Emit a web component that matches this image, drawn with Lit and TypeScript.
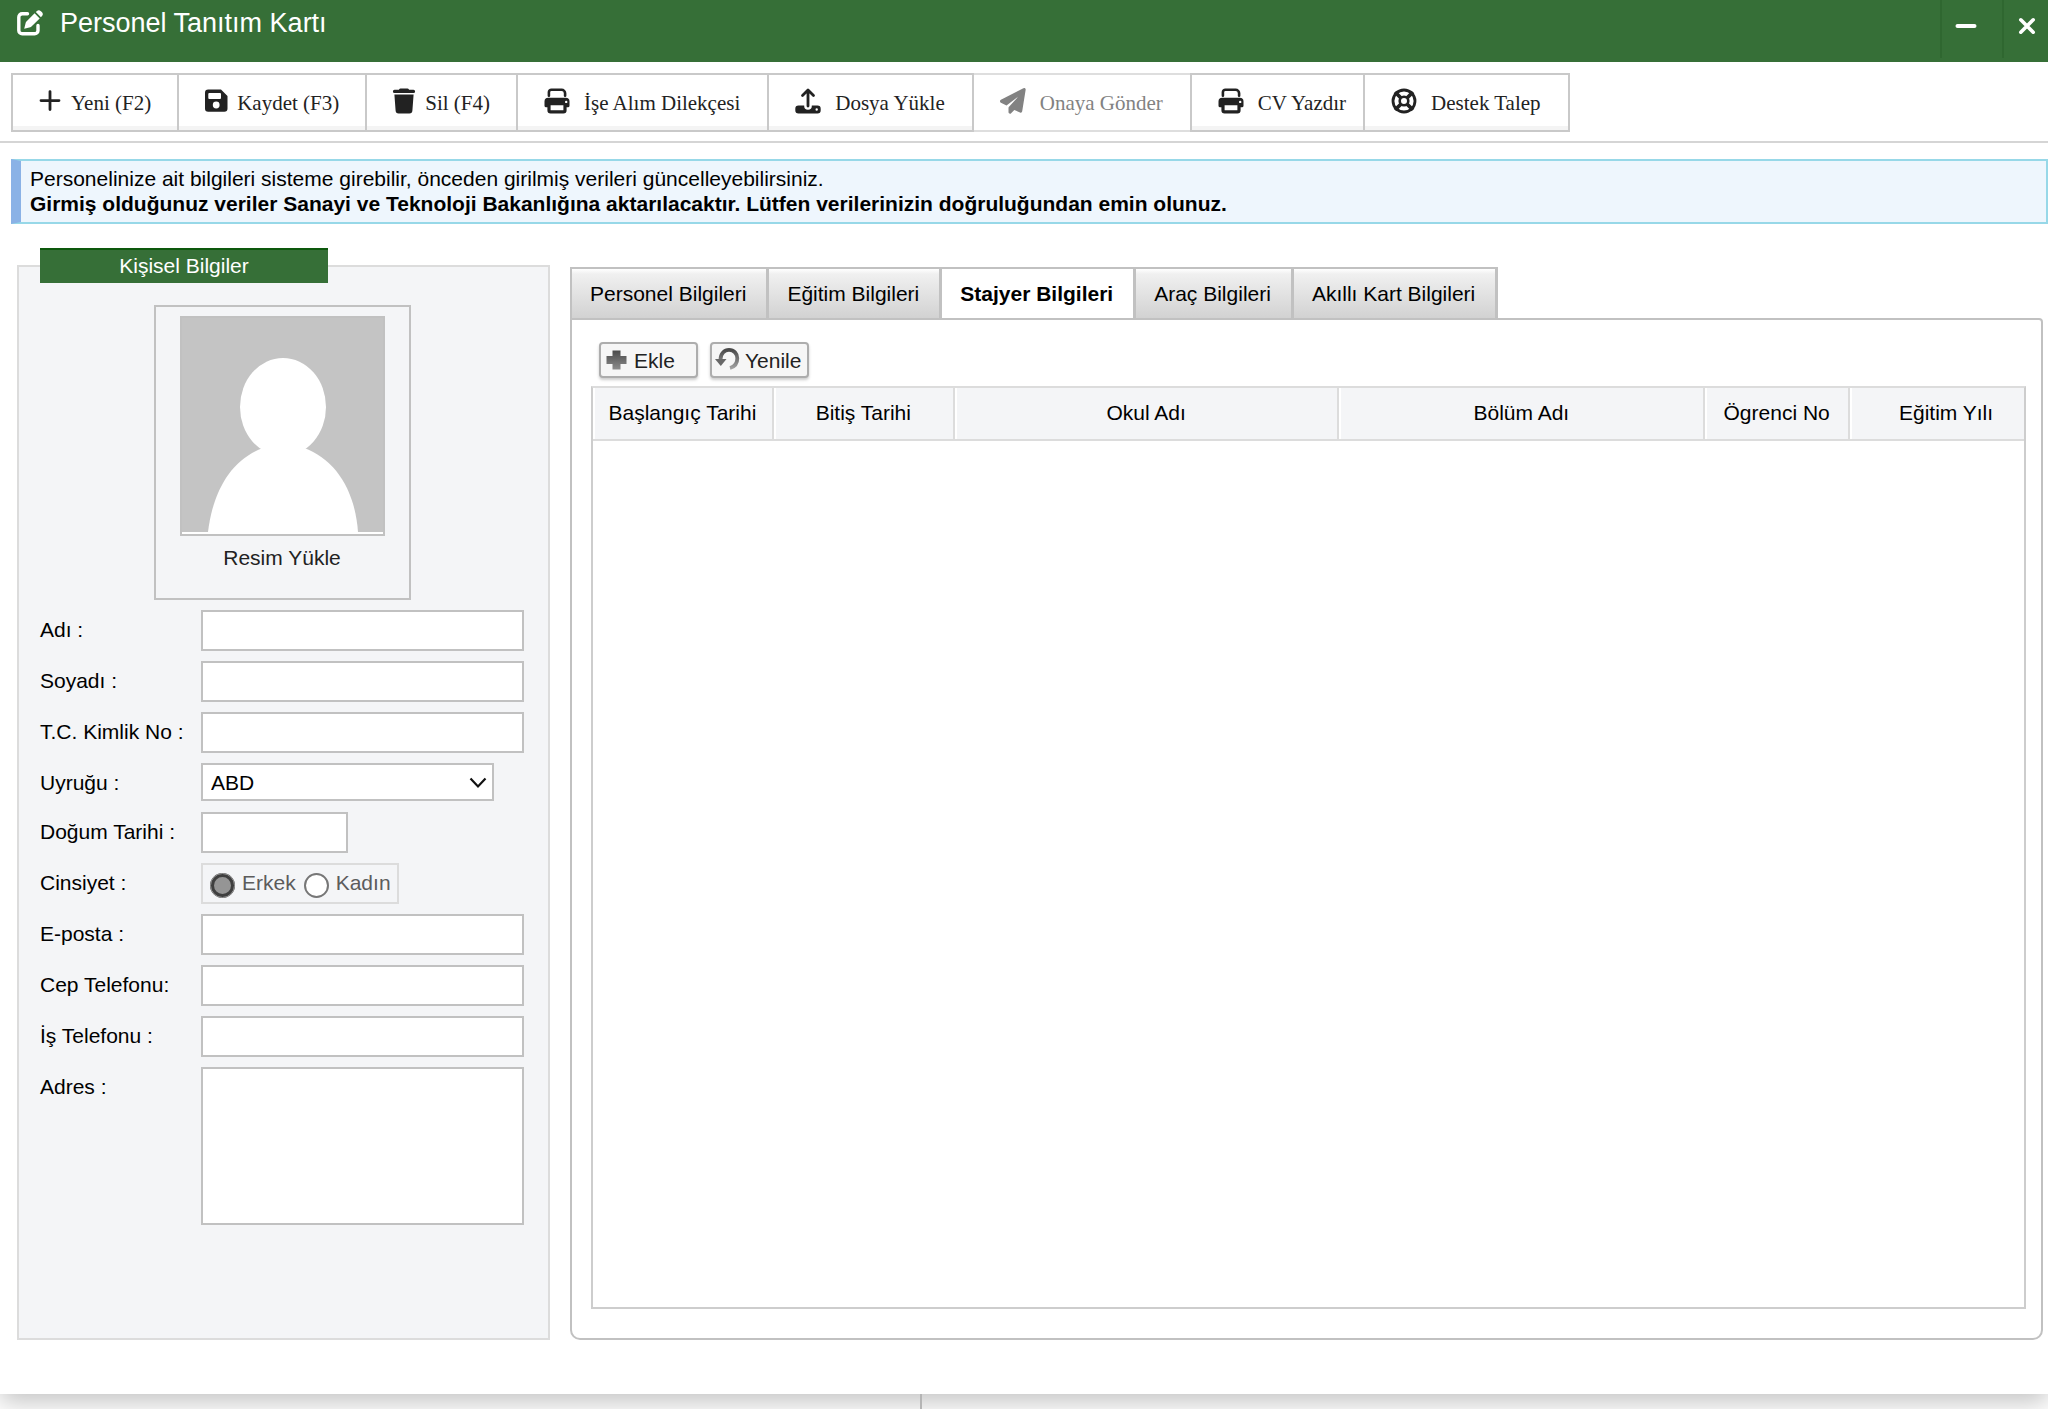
import { LitElement, html, css, svg } from "lit";
import { customElement, property, state } from "lit/decorators.js";
import { classMap } from "lit/directives/class-map.js";

const icons: Record<string, unknown> = {
  edit: svg`<path fill="none" stroke="currentColor" stroke-width="3.400" stroke-linecap="round" stroke-linejoin="round" d="M10.500 3.800H5.200A3.400 3.400 0 0 0 1.800 7.200v13.200a3.400 3.400 0 0 0 3.400 3.400h12.400a3.400 3.400 0 0 0 3.400-3.400v-5"/><path fill="currentColor" d="M7.200 18.800l1.500-6.100a2 2 0 0 1 .5-.9l8.400-8.500 5.100 5.100-8.500 8.400a2 2 0 0 1-.9.5zM18.800 2.100l.9-.9a3 3 0 0 1 4.200 0l.9.9a3 3 0 0 1 0 4.200l-.9.9z"/>`,
  plus: svg`<path fill="none" stroke="currentColor" stroke-width="2.800" stroke-linecap="round" d="M13 3.600v18M4 12.600h18"/>`,
  save: svg`<path fill="currentColor" fill-rule="evenodd" d="M5.500 1.500H18L24.500 8v12.500a3.200 3.200 0 0 1-3.200 3.200H5.200A3.200 3.200 0 0 1 2 20.500V4.700a3.200 3.200 0 0 1 3.200-3.200zM6.300 5a1 1 0 0 0-1 1v4a1 1 0 0 0 1 1H17a1 1 0 0 0 1-1V6a1 1 0 0 0-1-1zM13.200 13.600a3.400 3.400 0 1 0 0 6.800 3.400 3.400 0 0 0 0-6.800z"/>`,
  trash: svg`<path fill="currentColor" d="M9.500.4h7a1.400 1.400 0 0 1 1.300.9l.2.500h4.500a1.500 1.500 0 0 1 0 3.200h-19a1.500 1.500 0 0 1 0-3.200H8l.2-.5a1.400 1.400 0 0 1 1.300-.9zM3.400 6.400h19.200l-1.200 16.200a3 3 0 0 1-3 2.900H7.600a3 3 0 0 1-3-2.900z"/>`,
  print: svg`<path fill="none" stroke="currentColor" stroke-width="2.600" stroke-linecap="round" d="M4.900 7.700V4.300A2.500 2.500 0 0 1 7.400 1.800h10.200a3.500 3.500 0 0 1 3.500 3.500v2.400"/><path fill="currentColor" fill-rule="evenodd" d="M4.200 9.800h17.600a3.700 3.700 0 0 1 3.700 3.700v4.200a1.600 1.600 0 0 1-1.600 1.600h-1.300v3a3.200 3.200 0 0 1-3.200 3.200H6.600a3.200 3.200 0 0 1-3.200-3.200v-3H2.100a1.600 1.600 0 0 1-1.600-1.600v-4.200a3.700 3.700 0 0 1 3.700-3.700zM6.600 17.300v5h12.800v-5zM22.200 12.700a1.200 1.200 0 1 0 0 2.400 1.200 1.200 0 0 0 0-2.400z"/>`,
  upload: svg`<path fill="none" stroke="currentColor" stroke-width="2.800" stroke-linecap="round" stroke-linejoin="round" d="M13 18V2.200M7.500 7.500L13 2l5.500 5.500"/><path fill="currentColor" fill-rule="evenodd" d="M3.500 17.600h5.700v.4a3.800 3.800 0 0 0 7.600 0v-.4h5.700a3.200 3.200 0 0 1 3.200 3.200v1.500a3.200 3.200 0 0 1-3.200 3.200h-19A3.200 3.200 0 0 1 .3 22.300v-1.500a3.200 3.200 0 0 1 3.200-3.200zM21.700 20.300a1.200 1.200 0 1 0 0 2.400 1.200 1.200 0 0 0 0-2.400z"/>`,
  plane: svg`<path fill="currentColor" d="M25.700 1.500l-3.500 21.800a1.600 1.600 0 0 1-2.200 1.200l-5.700-2.500-3.200 3.200a1.500 1.500 0 0 1-2.600-1.100v-4.200c0-.4.200-.8.500-1.100L18.300 8.600 6.500 17.400.9 14.700a1.600 1.600 0 0 1 0-2.900L23.400.3a1.600 1.600 0 0 1 2.300 1.200z"/>`,
  life: svg`<g fill="none" stroke="currentColor"><circle stroke-width="2.800" cx="13" cy="13" r="11"/><circle stroke-width="2.600" cx="13" cy="13" r="4.300"/><path stroke-width="3.800" d="M4 4l6 6M16 16l6 6M22 4l-6 6M10 16l-6 6"/></g>`,
  minus: svg`<path stroke="currentColor" stroke-width="4" stroke-linecap="round" d="M4.500 13h17"/>`,
  close: svg`<path stroke="currentColor" stroke-width="3.600" stroke-linecap="round" d="M6.800 6.800l12.400 12.400M19.200 6.800L6.800 19.200"/>`,
  add: svg`<defs><linearGradient id="a" x2="0" y2="1"><stop stop-color="#4a4a4a"/><stop offset="1" stop-color="#8c8c8c"/></linearGradient></defs><path fill="url(#a)" d="M8.500 3.500h8V9h6v8h-6v5.500h-8V17h-6V9h6z"/>`,
  undo: svg`<defs><linearGradient id="u" x2="0" y2="1"><stop stop-color="#4a4a4a"/><stop offset="1" stop-color="#a0a0a0"/></linearGradient></defs><path fill="none" stroke="url(#u)" stroke-width="3.800" d="M5.500 12.500C5.500 6.500 9.500 2.900 14 2.900c5 0 8.300 3.700 8.300 8.400 0 5-3 8.600-7.300 9.700"/><path fill="#686868" d="M0 12h11.500l-5.700 7z"/>`,
};

@customElement("ui-icon")
class UiIcon extends LitElement {
  @property() name = "";
  static styles = css`
    :host { display: inline-flex; flex: none; }
    svg { width: 26px; height: 26px; display: block; }
  `;
  render() {
    return html`<svg viewBox="0 0 26 26" aria-hidden="true">${icons[this.name]}</svg>`;
  }
}

interface Tool { icon: string; label: string; tight?: boolean; snug?: boolean; disabled?: boolean }

const tools: Tool[] = [
  { icon: "plus", label: "Yeni (F2)", tight: true },
  { icon: "save", label: "Kaydet (F3)", tight: true },
  { icon: "trash", label: "Sil (F4)", tight: true },
  { icon: "print", label: "İşe Alım Dilekçesi" },
  { icon: "upload", label: "Dosya Yükle" },
  { icon: "plane", label: "Onaya Gönder", disabled: true },
  { icon: "print", label: "CV Yazdır", snug: true },
  { icon: "life", label: "Destek Talep" },
];

const tabs = ["Personel Bilgileri", "Eğitim Bilgileri", "Stajyer Bilgileri", "Araç Bilgileri", "Akıllı Kart Bilgileri"];

const columns = [
  { label: "Başlangıç Tarihi", width: 181 },
  { label: "Bitiş Tarihi", width: 181 },
  { label: "Okul Adı", width: 385 },
  { label: "Bölüm Adı", width: 366 },
  { label: "Ögrenci No", width: 145 },
  { label: "Eğitim Yılı", width: 174 },
];
const totalWidth = columns.reduce((sum, c) => sum + c.width, 0);

@customElement("personal-info")
class PersonalInfo extends LitElement {
  static styles = css`
    :host { display: grid; }
    * { box-sizing: border-box; }
    .panel { min-width: 0; margin: 0; padding: 0 24px 0 21px; border: 2px solid #dcdcdc; background: #f4f5f7; }
    .legend { width: 288px; height: 35px; margin: 0 auto 0 0; padding: 0; border-top: 2px solid #0d580d; background: #366f37; color: #fff; text-align: center; line-height: 32px; }
    .photo { display: flex; flex-direction: column; align-items: center; width: 257px; height: 295px; margin: 22px auto 10px; padding: 9px 0 0; border: 2px solid #c1c1c1; background: none; font: inherit; color: #222; }
    .avatar { display: block; width: 205px; height: 220px; border: 2px solid #c1c1c1; background: #fff; }
    .caption { line-height: 44px; }
    .form { display: grid; grid-template-columns: 161px 1fr; row-gap: 10px; }
    .label { line-height: 39px; white-space: nowrap; }
    .box { width: 100%; height: 41px; margin: 0; padding: 0 8px; border: 2px solid #c1c1c1; border-radius: 0; background: #fff; font: inherit; color: #000; }
    .short { width: 147px; }
    .area { display: block; height: 158px; resize: none; }
    .pick { display: grid; width: 293px; }
    .pick > * { grid-area: 1 / 1; }
    .select { height: 38px; appearance: none; }
    .arrow { place-self: center end; width: 18px; height: 12px; margin-right: 7px; pointer-events: none; }
    .gender { display: flex; align-items: center; justify-self: start; gap: 8px; width: 198px; height: 41px; padding: 0 7px 3px; border: 2px solid #dcdcdc; color: #5c5c5c; }
    .choice { display: flex; align-items: center; gap: 7px; }
    .radio { appearance: none; flex: none; width: 25px; height: 25px; margin: 6px 0 0; border: 2px solid #777; border-radius: 50%; background: #fff; }
    .radio:checked { border: 4px solid #3f3f3f; background: #959595; outline: 1px solid #999; outline-offset: -1px; }
  `;

  private text(id: string, label: string, extra = "") {
    return html`<label class="label" for=${id}>${label}</label><input class="box ${extra}" id=${id} type="text" />`;
  }

  render() {
    return html`
      <fieldset class="panel">
        <legend class="legend">Kişisel Bilgiler</legend>
        <button class="photo" type="button">
          <svg class="avatar" viewBox="0 0 201 216" aria-hidden="true">
            <path fill="#c4c4c4" d="M0 0h201v214H0z" />
            <ellipse fill="#fff" cx="101" cy="89" rx="43" ry="49" />
            <path fill="#fff" d="M26 214C31 172 50 141 81 130h41c31 11 51 42 54 84z" />
          </svg>
          <span class="caption">Resim Yükle</span>
        </button>
        <div class="form">
          ${this.text("ad", "Adı :")} ${this.text("soyad", "Soyadı :")} ${this.text("tc", "T.C. Kimlik No :")}
          <label class="label" for="uyruk">Uyruğu :</label>
          <div class="pick">
            <select class="box select" id="uyruk"><option>ABD</option></select>
            <svg class="arrow" viewBox="0 0 18 12" aria-hidden="true"><path d="M1.500 1.500L9 9.500l7.500-8" fill="none" stroke="#111" stroke-width="2.200" /></svg>
          </div>
          ${this.text("dogum", "Doğum Tarihi :", "short")}
          <span class="label" id="cinsiyet">Cinsiyet :</span>
          <div class="gender" role="radiogroup" aria-labelledby="cinsiyet">
            <label class="choice"><input class="radio" type="radio" name="cinsiyet" checked />Erkek</label>
            <label class="choice"><input class="radio" type="radio" name="cinsiyet" />Kadın</label>
          </div>
          ${this.text("eposta", "E-posta :")} ${this.text("cep", "Cep Telefonu:")} ${this.text("is", "İş Telefonu :")}
          <label class="label" for="adres">Adres :</label>
          <textarea class="box area" id="adres"></textarea>
        </div>
      </fieldset>
    `;
  }
}

@customElement("detail-tabs")
class DetailTabs extends LitElement {
  @state() private active = 2;

  static styles = css`
    :host { display: flex; flex-direction: column; min-width: 0; }
    * { box-sizing: border-box; }
    .tabs { display: flex; border-left: 2px solid #c1c1c1; }
    .tab { height: 51px; padding: 0 20px 0 18px; border: 0 solid #c1c1c1; border-top-width: 2px; border-right-width: 3px; background: linear-gradient(#fff 0, #f0f0f0 5px, #d2d2d2); font: inherit; color: #000; white-space: nowrap; line-height: 46px; }
    .active { background: #fff; font-weight: bold; }
    .pane { flex: 1; display: flex; flex-direction: column; padding: 22px 15px 29px 19px; border: 2px solid #c1c1c1; border-radius: 0 4px 10px 10px; background: #fff; }
    .actions { display: flex; gap: 12px; padding-left: 8px; margin-bottom: 8px; }
    .action { display: flex; align-items: center; gap: 4px; width: 99px; height: 36px; padding: 0 0 0 3px; border: 2px solid #adadad; border-radius: 4px; background: #f6f6f6; box-shadow: 0 2px 3px #ccc; font: inherit; color: #222; }
    .grid { flex: 1; border: 2px solid #cdcdcd; border-top-color: #dcdcdc; }
    .table { width: 100%; table-layout: fixed; border-collapse: separate; border-spacing: 0; }
    .head { height: 53px; padding: 0 0 2px; border-right: 2px solid #dcdcdc; border-bottom: 2px solid #dcdcdc; box-shadow: inset 2px 0 #fff; background: #f4f5f7; font-weight: normal; text-align: center; white-space: nowrap; }
    .head:last-child { padding-left: 18px; border-right: 0; }
  `;

  render() {
    return html`
      <div class="tabs" role="tablist">
        ${tabs.map((t, i) => html`<button type="button" role="tab" aria-selected=${i === this.active ? "true" : "false"}
          class=${classMap({ tab: true, active: i === this.active })} @click=${() => (this.active = i)}>${t}</button>`)}
      </div>
      <section class="pane" role="tabpanel">
        <div class="actions">
          <button class="action" type="button"><ui-icon name="add"></ui-icon>Ekle</button>
          <button class="action" type="button"><ui-icon name="undo"></ui-icon>Yenile</button>
        </div>
        <div class="grid">
          <table class="table">
            <colgroup>${columns.map((c) => html`<col style="width:${(c.width / totalWidth) * 100}%" />`)}</colgroup>
            <thead><tr>${columns.map((c) => html`<th class="head" scope="col">${c.label}</th>`)}</tr></thead>
          </table>
        </div>
      </section>
    `;
  }
}

@customElement("app-root")
class AppRoot extends LitElement {
  static styles = css`
    :host { display: flex; flex-direction: column; min-height: 100vh; overflow: hidden; background: #fff; font: 21px/25px "Liberation Sans", Arial, sans-serif; color: #000; }
    * { box-sizing: border-box; }
    .window { flex: 1; display: flex; flex-direction: column; z-index: 1; background: #fff; box-shadow: 0 8px 24px rgba(0, 0, 0, 0.24); }
    .titlebar { display: flex; height: 62px; background: #366f37; color: #fff; }
    .title { flex: 1; display: flex; align-items: flex-start; gap: 17px; margin: 0; padding: 10px 0 0 17px; font-size: 27px; line-height: 26px; font-weight: normal; }
    .control { width: 62px; height: 58px; padding: 0 12px 4px 0; border: 0; border-left: 2px solid #2f6730; background: none; color: #fff; }
    .control:last-child { width: 46px; padding-right: 0; padding-left: 2px; }
    .toolbar { display: flex; padding: 11px 11px 9px; border-bottom: 2px solid #d5d5d5; }
    .tool { display: flex; align-items: center; gap: 14px; height: 59px; margin-right: -2px; padding: 0 27px 4px 26px; border: 2px solid #c9c9c9; background: #fff; box-shadow: inset 0 -4px #f4f4f4; font: 21px/26px "Liberation Serif", "Times New Roman", serif; color: #222; white-space: nowrap; }
    .tool.tight { gap: 8px; padding-left: 24px; padding-right: 26px; }
    .tool.snug { padding-right: 17px; }
    .tool:disabled { border-color: #dedede; border-width: 2px 0; margin: 0 0 0 2px; box-shadow: none; color: #828282; }
    .label { padding-top: 4px; }
    .notice { margin: 16px 0 24px 11px; padding: 5px 8px 6px 9px; border: 2px solid #97d8e8; border-left: 10px solid #8ab2e6; background: #eef6fd; }
    .line { margin: 0; }
    .strong { font-weight: bold; }
    .body { flex: 1; display: grid; grid-template-columns: 533px minmax(0, 1fr); gap: 20px; padding: 0 5px 54px 17px; }
    .details { margin-top: 19px; }
    .backdrop { height: 15px; display: grid; grid-template-columns: 922px 1fr; }
    .split { border-right: 2px solid #b5b5b5; z-index: 2; }
  `;

  render() {
    return html`
      <main class="window">
        <header class="titlebar">
          <h1 class="title"><ui-icon name="edit"></ui-icon>Personel Tanıtım Kartı</h1>
          <button class="control" type="button" aria-label="Küçült"><ui-icon name="minus"></ui-icon></button>
          <button class="control" type="button" aria-label="Kapat"><ui-icon name="close"></ui-icon></button>
        </header>
        <nav class="toolbar">
          ${tools.map((t) => html`<button type="button" class=${classMap({ tool: true, tight: !!t.tight, snug: !!t.snug })} ?disabled=${!!t.disabled}>
            <ui-icon name=${t.icon}></ui-icon><span class="label">${t.label}</span></button>`)}
        </nav>
        <div class="notice">
          <p class="line">Personelinize ait bilgileri sisteme girebilir, önceden girilmiş verileri güncelleyebilirsiniz.</p>
          <p class="line strong">Girmiş olduğunuz veriler Sanayi ve Teknoloji Bakanlığına aktarılacaktır. Lütfen verilerinizin doğruluğundan emin olunuz.</p>
        </div>
        <div class="body">
          <personal-info></personal-info>
          <detail-tabs class="details"></detail-tabs>
        </div>
      </main>
      <div class="backdrop"><div class="split"></div></div>
    `;
  }
}
